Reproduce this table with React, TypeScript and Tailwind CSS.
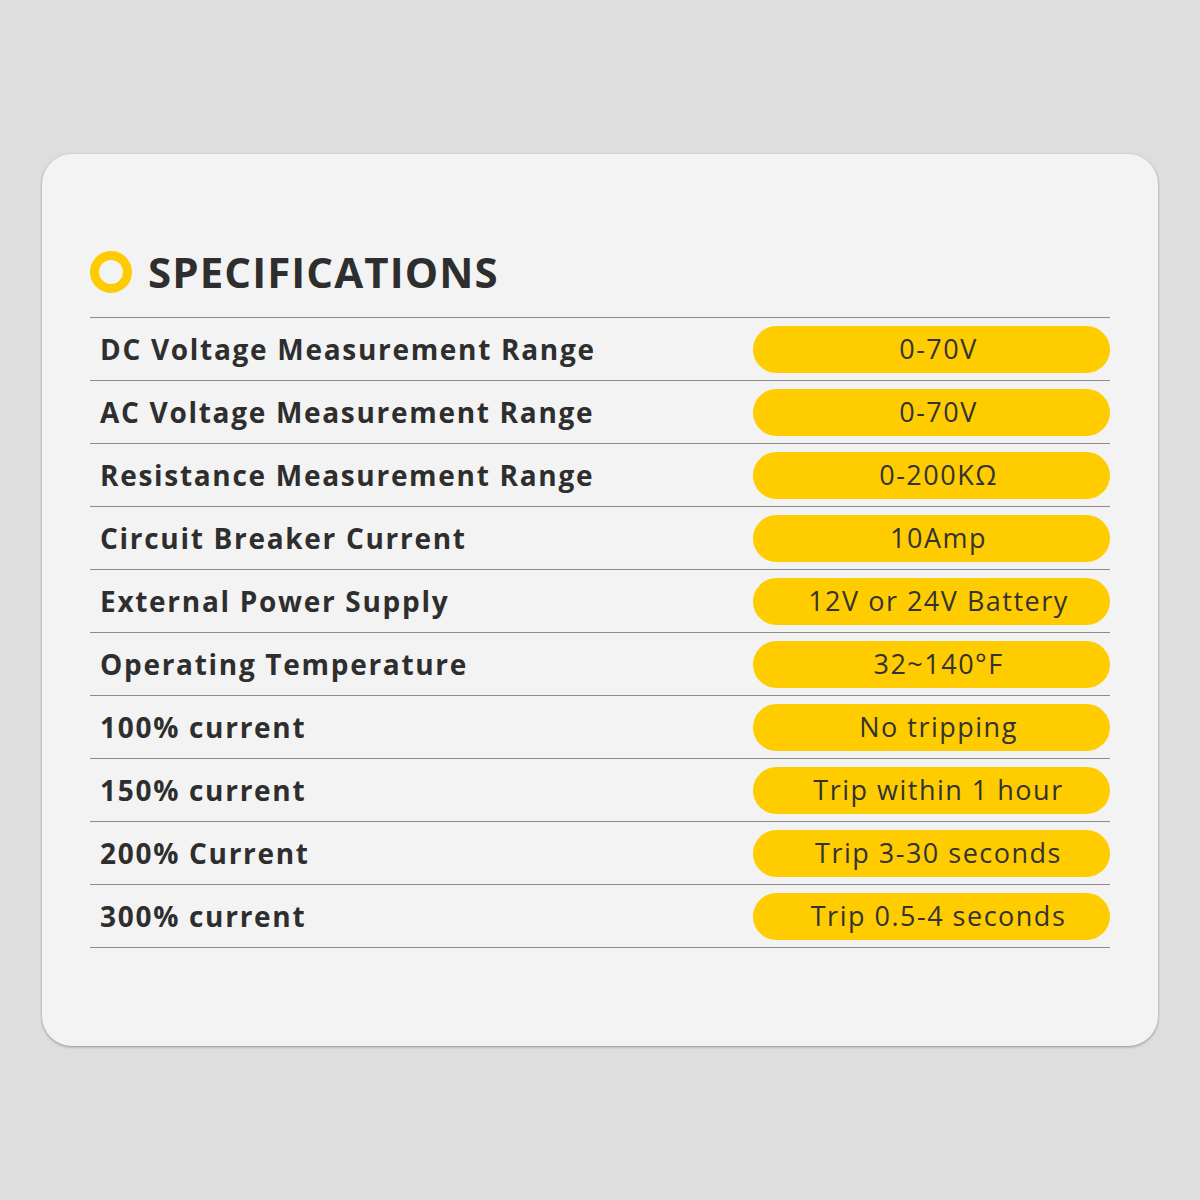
import React from 'react';

const specs: [string, string][] = [
  ['DC Voltage Measurement Range', '0-70V'],
  ['AC Voltage Measurement Range', '0-70V'],
  ['Resistance Measurement Range', '0-200KΩ'],
  ['Circuit Breaker Current', '10Amp'],
  ['External Power Supply', '12V or 24V Battery'],
  ['Operating Temperature', '32~140°F'],
  ['100% current', 'No tripping'],
  ['150% current', 'Trip within 1 hour'],
  ['200% Current', 'Trip 3-30 seconds'],
  ['300% current', 'Trip 0.5-4 seconds'],
];

export default function App() {
  return (
    <div className="w-[1200px] h-[1200px] bg-[#dedede] pt-[154px] pl-[42px] font-['Open_Sans',sans-serif]">
      <div className="w-[1116px] h-[892px] bg-[#f3f3f3] rounded-[30px] shadow-[0_1px_3px_rgba(0,0,0,0.35)] pt-[95px] px-[48px]">
        <div className="flex items-center gap-[16px] h-[46px]">
          <div className="w-[42px] h-[42px] rounded-full border-[9px] border-[#fdcb00]" />
          <h1 className="text-[42px] font-bold text-[#2e2e2e] tracking-[1.1px] leading-none">SPECIFICATIONS</h1>
        </div>
        <div className="mt-[22px] border-t border-[#8c8c8c]">
          {specs.map(([label, value]) => (
            <div key={label} className="flex items-center h-[63px] border-b border-[#8c8c8c]">
              <div className="flex-1 pl-[10px] text-[28px] font-bold text-[#2e2e2e] tracking-[1.7px]">{label}</div>
              <div className="w-[357px] h-[47px] rounded-full bg-[#ffcc00] flex items-center justify-center pl-[14px] text-[27px] text-[#333] tracking-[1.5px]">
                {value}
              </div>
            </div>
          ))}
        </div>
      </div>
    </div>
  );
}
